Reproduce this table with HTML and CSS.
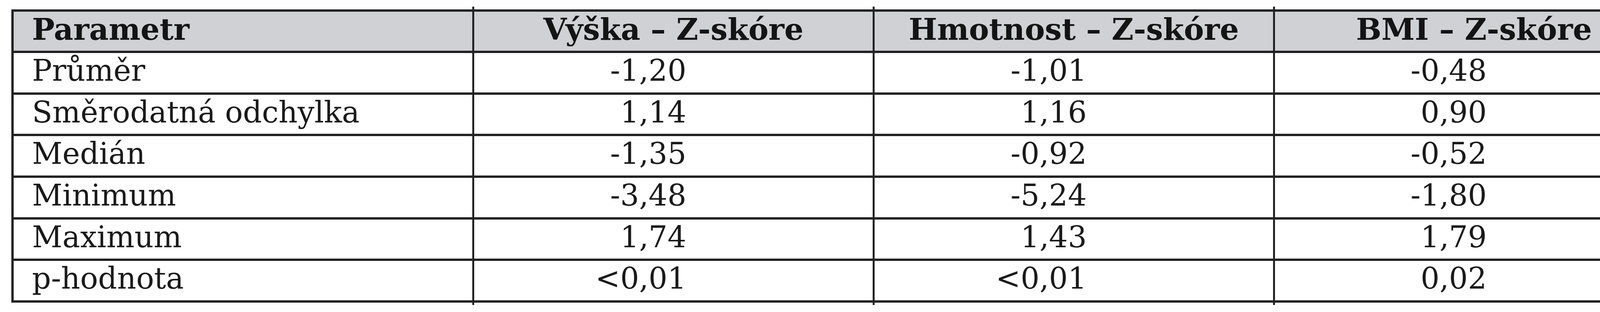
FILE: index.html
```html
<!DOCTYPE html>
<html lang="cs">
<head>
<meta charset="utf-8">
<title>Z-skóre</title>
<link rel="stylesheet" href="styles.css">
</head>
<body>
<div class="frame">
  <div class="grid">
    <div class="cell head label">Parametr</div>
    <div class="cell head">Výška – Z-skóre</div>
    <div class="cell head">Hmotnost – Z-skóre</div>
    <div class="cell head">BMI – Z-skóre</div>

    <div class="cell label">Průměr</div>
    <div class="cell num">-1,20</div>
    <div class="cell num">-1,01</div>
    <div class="cell num">-0,48</div>

    <div class="cell label">Směrodatná odchylka</div>
    <div class="cell num">1,14</div>
    <div class="cell num">1,16</div>
    <div class="cell num">0,90</div>

    <div class="cell label">Medián</div>
    <div class="cell num">-1,35</div>
    <div class="cell num">-0,92</div>
    <div class="cell num">-0,52</div>

    <div class="cell label">Minimum</div>
    <div class="cell num">-3,48</div>
    <div class="cell num">-5,24</div>
    <div class="cell num">-1,80</div>

    <div class="cell label">Maximum</div>
    <div class="cell num">1,74</div>
    <div class="cell num">1,43</div>
    <div class="cell num">1,79</div>

    <div class="cell label">p-hodnota</div>
    <div class="cell num">&lt;0,01</div>
    <div class="cell num">&lt;0,01</div>
    <div class="cell num">0,02</div>
  </div>
</div>
</body>
</html>
```
FILE: styles.css
```css
html, body {
  margin: 0;
  padding: 0;
  background: #ffffff;
}

body {
  font-family: "DejaVu Serif", "Liberation Serif", serif;
  color: #1a1a1a;
}

.frame {
  width: 4260px;
  margin: 17px 0 0 29px;
  padding: 7px 0 6px;
  background-image: linear-gradient(to right,
    transparent 1180px, #222222 1180px, #222222 1185px, transparent 1185px,
    transparent 2205px, #222222 2205px, #222222 2210px, transparent 2210px,
    transparent 3230px, #222222 3230px, #222222 3235px, transparent 3235px);
}

.grid {
  display: grid;
  grid-template-columns: 1174px 1020px 1020px 1019px;
  grid-template-rows: 100px repeat(6, 100.67px);
  column-gap: 5px;
  row-gap: 6px;
  padding: 6px;
  background: #222222;
}

.cell {
  background: #ffffff;
  font-size: 76px;
  line-height: normal;
  padding-top: 0;
  white-space: nowrap;
}

.head {
  background: #d0d1d5;
  font-weight: bold;
  font-size: 77px;
  text-align: center;
  color: #141414;
}

.label {
  text-align: left;
  padding-left: 47px;
}

.num {
  text-align: right;
  padding-right: 477px;
}
```
